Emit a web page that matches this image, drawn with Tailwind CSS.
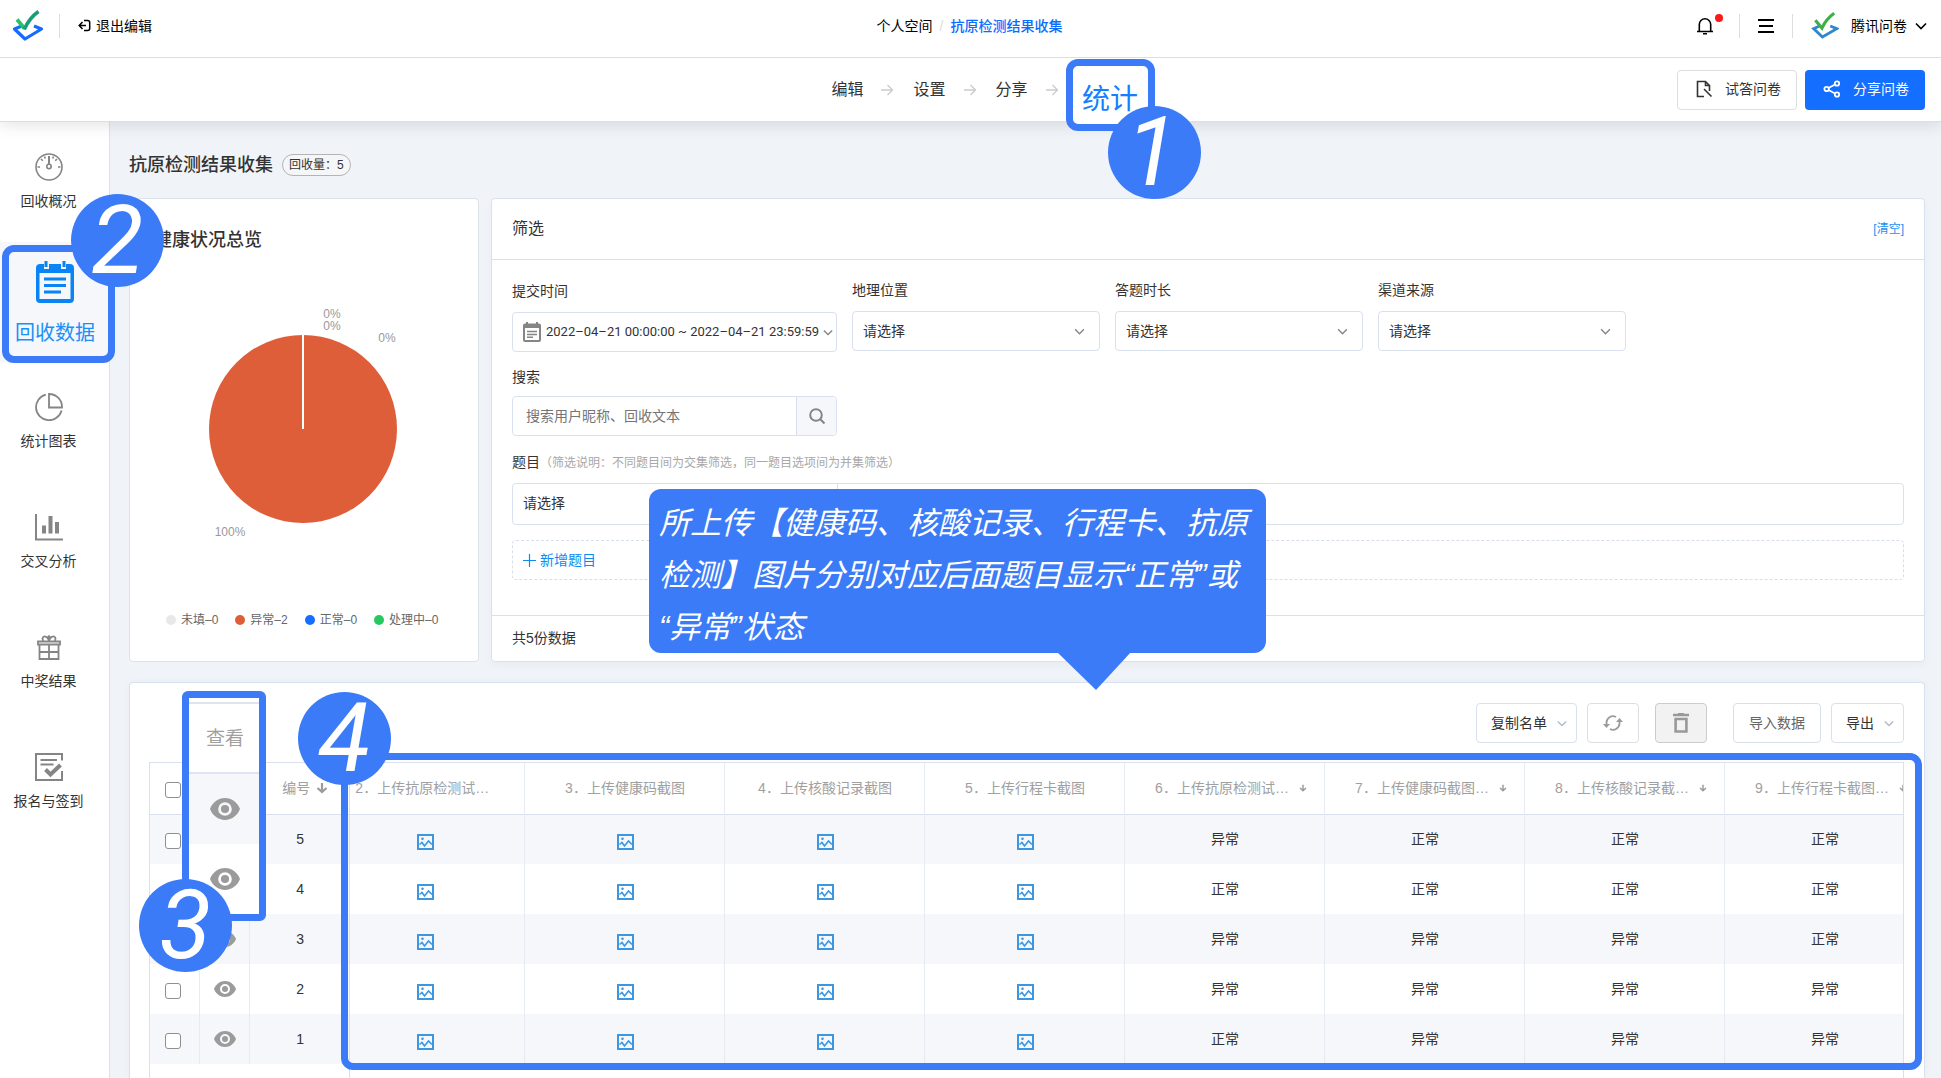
<!DOCTYPE html>
<html lang="zh-CN">
<head>
<meta charset="utf-8">
<meta name="viewport" content="width=device-width, initial-scale=1">
<title>抗原检测结果收集 - 腾讯问卷</title>
<script src="https://cdn.jsdelivr.net/npm/@tailwindcss/browser@4"></script>
</head>
<body class="flex min-h-screen flex-col overflow-x-hidden bg-[#f0f4f8] font-['Liberation_Sans','Noto_Sans_CJK_SC',sans-serif] text-sm leading-5 text-[#333]">

<svg class="hidden" aria-hidden="true">
  <symbol id="eye" viewBox="0 0 22 16"><path fill="#9b9b9b" fill-rule="evenodd" d="M11 0C6 0 1.800 3.300 0 8c1.800 4.700 6 8 11 8s9.200-3.300 11-8C20.200 3.300 16 0 11 0Zm0 13a5 5 0 1 1 0-10 5 5 0 0 1 0 10Zm0-2a3 3 0 1 0 0-6 3 3 0 0 0 0 6Z"/></symbol>
  <symbol id="image" viewBox="0 0 17 16"><path fill="none" stroke="#3d96e0" stroke-width="2" d="M1 1h15v14H1z"/><path fill="none" stroke="#3d96e0" stroke-width="1.600" d="m2.500 10.500 2.500-2L7.500 12l4-5L15 10.500"/><circle cx="5.500" cy="4.800" r="1.300" fill="#3d96e0"/></symbol>
  <symbol id="chev" viewBox="0 0 12 8"><path fill="none" stroke="currentColor" stroke-width="1.600" d="m1 1.500 5 5 5-5"/></symbol>
  <symbol id="down" viewBox="0 0 12 12"><path fill="none" stroke="#9b9b9b" stroke-width="2.200" d="M6 1v9M1.500 6 6 10l4.500-4"/></symbol>
  <symbol id="step" viewBox="0 0 12 12"><path fill="none" stroke="#ccc" stroke-width="1.400" d="M0 6h11M6.500 1l5 5-5 5"/></symbol>
</svg>

<div class="relative z-20 bg-white shadow-[0_4px_14px_rgba(0,0,0,0.1)]">
  <header class="grid h-[58px] grid-cols-[1fr_auto_1fr] items-center border-b border-[#dcdee0] pr-[14px] pb-[6px] pl-3 text-black">
    <div class="flex items-center">
      <svg class="h-8 w-8" viewBox="0 0 32 32" role="img" aria-label="腾讯问卷">
        <path fill="none" stroke="#146cff" stroke-width="3.200" stroke-linejoin="round" d="M11 15.500 2.500 19 13 29 29.500 19 22 16"/>
        <path fill="none" stroke="#25c46a" stroke-width="3.800" d="M5 9.500l7.500 9"/><path fill="none" stroke="#1a9c78" stroke-width="3.600" d="M12.200 19.500C16 11 20 6 26.500 1.500"/>
      </svg>
      <span class="ml-[15px] h-6 w-px bg-[#dcdee0]"></span>
      <a href="#" class="ml-[18px] flex items-center gap-[5px]">
        <svg class="h-[13px] w-[13px]" viewBox="0 0 13 13" fill="none" stroke="#000" stroke-width="1.500"><path d="M1.500 6.500H8M4.500 3l-3.300 3.500L4.500 10M6 1.500h3.500c1.500 0 2.200.7 2.200 2v6c0 1.300-.7 2-2.200 2H6"/></svg>
        退出编辑
      </a>
    </div>
    <nav class="flex items-center gap-[7px]">
      <a href="#">个人空间</a><span class="text-[#ddd]">/</span><a href="#" class="font-medium text-[#0a6cff]">抗原检测结果收集</a>
    </nav>
    <div class="flex items-center justify-end">
      <button class="relative mr-[26px]" aria-label="通知">
        <svg class="h-[18px] w-4" viewBox="0 0 16 18" fill="none" stroke="#000" stroke-width="1.600"><path d="M0 14.500h16M2.300 14.500V7.500a5.700 5.700 0 0 1 11.400 0v7M6 16.800h4"/></svg>
        <span class="absolute -top-[3px] left-[18px] h-2 w-2 rounded-full bg-[#fb1818]"></span>
      </button>
      <span class="h-6 w-px bg-[#dcdee0]"></span>
      <button class="mx-[18px]" aria-label="菜单"><svg class="h-4 w-4" viewBox="0 0 16 16" stroke="#000" stroke-width="1.800"><path d="M0 2h16M1 8h14M0 14h16"/></svg></button>
      <span class="mr-[18px] h-6 w-px bg-[#dcdee0]"></span>
      <button class="flex items-center">
        <svg class="mr-3 h-7 w-7" viewBox="0 0 32 32"><path fill="none" stroke="#3186cc" stroke-width="3.200" d="M11 15.500 3 19 13 28.500 29.500 19 22 16"/><path fill="none" stroke="#3eae48" stroke-width="3.600" d="M5 9.500l7.500 9C16 11 20 6 26.500 1.500"/></svg>
        腾讯问卷
        <svg class="ml-2 h-2 w-3" aria-hidden="true"><use href="#chev"/></svg>
      </button>
    </div>
  </header>

  <div class="grid h-16 grid-cols-[1fr_auto_1fr] items-center border-b border-[#dcdee0] px-4">
    <nav class="col-start-2 flex items-center text-base">
      <a href="#">编辑</a><svg class="mr-5 ml-[18px] h-3 w-3"><use href="#step"/></svg>
      <a href="#">设置</a><svg class="mr-5 ml-[18px] h-3 w-3"><use href="#step"/></svg>
      <a href="#">分享</a><svg class="mr-5 ml-[18px] h-3 w-3"><use href="#step"/></svg>
      <span class="relative h-5 w-8">
        <a href="#" class="absolute -top-[21px] -left-3 flex h-[72px] w-[89px] items-center justify-center rounded-xl border-[7px] border-[#3b7bf7] bg-white pt-[10px] text-[28px] leading-8 text-[#1480ff]">统计</a>
        <span class="absolute top-[26px] left-[30px] flex h-[93px] w-[93px] items-center justify-center rounded-full bg-[#3b7bf7] pr-1 font-['Roboto'] text-[96px] leading-[93px] text-white italic">1</span>
      </span>
    </nav>
    <div class="flex justify-end gap-2">
      <button class="flex h-10 w-[120px] items-center gap-3 rounded-sm border border-[#dcdee0] pl-[17px] pb-px">
        <svg class="h-[18px] w-[18px]" viewBox="0 0 18 18" fill="none" stroke="#333" stroke-width="1.600"><path d="M9 16.500H2.500v-15h8l4 4V11M10.500 1.500v4h4M9 9l7.500 7.500"/></svg>试答问卷
      </button>
      <button class="flex h-10 w-[120px] items-center gap-3 rounded-sm bg-[#146eff] pl-[18px] pb-px text-white">
        <svg class="h-[18px] w-[18px]" viewBox="0 0 18 18" fill="none" stroke="#fff" stroke-width="1.800"><circle cx="3.600" cy="9" r="2.200"/><circle cx="14" cy="3.500" r="2.200"/><circle cx="14" cy="14.500" r="2.200"/><path d="M5.500 8 12 4.500M5.500 10l6.500 3.500"/></svg>分享问卷
      </button>
    </div>
  </div>
</div>

<div class="flex flex-1">
  <aside class="relative z-10 w-[110px] shrink-0 border-r border-[#dbe2ee] bg-white pr-3">
    <nav>
      <a href="#" class="flex h-[120px] flex-col items-center gap-[10px] pt-[31px]">
        <svg class="h-7 w-7" viewBox="0 0 28 28" fill="none" stroke="#858585" stroke-width="1.600"><circle cx="14" cy="14" r="13"/><circle cx="14" cy="13.500" r="2.200"/><path stroke-width="2" d="M14 3v8"/><path d="M2.500 14h2.500M23 14h2.500M6 6l1.800 1.800M22 6l-1.800 1.800M9.500 3.500l.8 2M18.500 3.500l-.8 2"/></svg>回收概况
      </a>
      <a href="#" class="relative -mr-3 block h-[120px] bg-[#f5f7fa]">
        <span class="absolute top-[3px] left-[2px] flex h-[118px] w-[113px] flex-col items-center rounded-xl border-[7px] border-[#3b7bf7] bg-[#f5f7fa] pt-[9px] pr-[7px] text-xl leading-6 text-[#1a90f8]">
          <svg class="h-[42px] w-[38px]" viewBox="0 0 38 42"><path fill="#0a84f5" d="M4 3h4v5h5V3h12v5h5V3h4c2.500 0 4 1.500 4 4v31c0 2.500-1.500 4-4 4H4c-2.500 0-4-1.500-4-4V7c0-2.500 1.500-4 4-4Z"/><path fill="#f5f7fa" d="M3.500 12h31v26h-31z"/><path stroke="#0a84f5" stroke-width="3" d="M8 18h22M8 24.500h22M8 31h17"/><path stroke="#0a84f5" stroke-width="3" d="M10 0v6M28 0v6"/></svg>
          <span class="mt-[18px]">回收数据</span>
        </span>
        <span class="absolute -top-12 left-[71px] flex h-[93px] w-[93px] items-center justify-center rounded-full bg-[#3b7bf7] font-['Roboto'] text-[96px] leading-[93px] text-white italic">2</span>
      </a>
      <a href="#" class="flex h-[120px] flex-col items-center gap-[10px] pt-[31px]">
        <svg class="h-7 w-7" viewBox="0 0 28 28" fill="none" stroke="#858585" stroke-width="1.800"><path d="M14 1v13.500h13A13 13 0 0 0 14 1ZM10.800 1.600A13 13 0 1 0 26.600 17.500"/></svg>统计图表
      </a>
      <a href="#" class="flex h-[120px] flex-col items-center gap-[10px] pt-[31px]">
        <svg class="h-7 w-7" viewBox="0 0 28 28" fill="none" stroke="#858585"><path stroke-width="2" d="M1 1v25.500h27"/><path stroke-width="4" d="M9 20.500v-8M15.500 20.500V3M22 20.500V9"/></svg>交叉分析
      </a>
      <a href="#" class="flex h-[120px] flex-col items-center gap-[10px] pt-[31px]">
        <svg class="h-7 w-7" viewBox="0 0 28 28" fill="none" stroke="#858585" stroke-width="1.800"><path d="M3 8.500h22v3H3zM4.500 12v14h19V12M4.500 19h19M14 12v14"/><path d="M14 8c-1-5-6-6-6.500-2.500L8 8M14 8c1-5 6-6 6.500-2.500L20 8M14 8c-2-4 0-5 0-5s2 1 0 5"/></svg>中奖结果
      </a>
      <a href="#" class="flex h-[120px] flex-col items-center gap-[10px] pt-[31px]">
        <svg class="h-7 w-7" viewBox="0 0 28 28" fill="none" stroke="#858585" stroke-width="2"><path d="M27 7.500V1H1v26h26v-9M5.500 7H22M5.500 11.500h13"/><path stroke-width="4" d="m10.500 16.500 5 5L25.500 12"/></svg>报名与签到
      </a>
    </nav>
  </aside>

  <main class="flex min-w-0 flex-1 flex-col pr-4 pl-[19px]">
    <div class="flex h-[76px] items-center gap-[9px] pt-[10px]">
      <h1 class="text-lg leading-6 font-medium">抗原检测结果收集</h1>
      <span class="flex h-[22px] items-center rounded-full border border-[#b4b4b4] bg-[#f5f6f7] px-[6px] text-xs">回收量：5</span>
    </div>

    <div class="flex gap-3">
      <section class="h-[464px] w-[350px] shrink-0 rounded border border-[#dbe2ea] bg-white px-6 pt-[29px]">
        <h2 class="text-lg leading-6 font-medium">健康状况总览</h2>
        <svg class="mt-[42px] ml-[19px] h-[300px] w-[260px] font-['Liberation_Sans'] text-xs" viewBox="0 0 260 300" fill="#999" text-anchor="middle">
          <circle cx="130" cy="135" r="94" fill="#df5e3a"/>
          <path stroke="#fff" stroke-width="2" d="M130 40v95"/>
          <text x="159" y="24">0%</text><text x="159" y="36">0%</text><text x="214" y="48">0%</text><text x="57" y="242">100%</text>
        </svg>
        <ul class="mt-[18px] ml-3 flex gap-[17px] text-xs leading-4 whitespace-nowrap text-[#666]">
          <li class="flex items-center gap-[5px]"><span class="h-[10px] w-[10px] rounded-full bg-[#e8e8e8]"></span>未填–0</li>
          <li class="flex items-center gap-[5px]"><span class="h-[10px] w-[10px] rounded-full bg-[#df5e3a]"></span>异常–2</li>
          <li class="flex items-center gap-[5px]"><span class="h-[10px] w-[10px] rounded-full bg-[#146eff]"></span>正常–0</li>
          <li class="flex items-center gap-[5px]"><span class="h-[10px] w-[10px] rounded-full bg-[#26c95f]"></span>处理中–0</li>
        </ul>
      </section>

      <section class="relative min-w-0 flex-1 rounded border border-[#d9e1ee] bg-white shadow-[0_4px_10px_rgba(0,0,0,0.03)]">
        <div class="flex h-[61px] items-center justify-between border-b border-[#d9e1ee] px-5">
          <h2 class="text-base">筛选</h2>
          <button class="text-xs text-[#1a90f0]">[清空]</button>
        </div>
        <form class="px-5 pt-5">
          <div class="flex items-start gap-[15px]">
            <div class="flex w-[325px] flex-col gap-[10px]">
              <span id="time-label" class="leading-[22px]">提交时间</span>
              <button type="button" aria-labelledby="time-label" class="flex h-10 items-center rounded-sm border border-[#d9e1ee] pl-[10px] whitespace-nowrap">
                <svg class="mr-[5px] h-5 w-[18px] shrink-0" viewBox="0 0 18 20"><path fill="#858585" fill-rule="evenodd" d="M2 1.500h1V0h2v1.500h8V0h2v1.500h1a2 2 0 0 1 2 2V18a2 2 0 0 1-2 2H2a2 2 0 0 1-2-2V3.500a2 2 0 0 1 2-2ZM2 6v12h14V6Z"/><path stroke="#858585" stroke-width="1.600" d="M4 9.500h10M4 12.500h10M4 15.200h6"/></svg>
                <span class="font-['Roboto'] text-[13px]">2022–04–21 00:00:00 ~ 2022–04–21 23:59:59</span>
                <svg class="ml-1 h-[7px] w-[10px] shrink-0 text-[#858585]"><use href="#chev"/></svg>
              </button>
            </div>
            <div class="flex w-[248px] flex-col gap-[11px]">
              <label for="loc">地理位置</label>
              <div class="relative text-[#858585]"><select id="loc" class="h-10 w-full appearance-none rounded-sm border border-[#d9e1ee] px-[10px] text-[#333]"><option>请选择</option></select><svg class="pointer-events-none absolute top-[17px] right-[15px] h-[7px] w-[11px]"><use href="#chev"/></svg></div>
            </div>
            <div class="flex w-[248px] flex-col gap-[11px]">
              <label for="dur">答题时长</label>
              <div class="relative text-[#858585]"><select id="dur" class="h-10 w-full appearance-none rounded-sm border border-[#d9e1ee] px-[10px] text-[#333]"><option>请选择</option></select><svg class="pointer-events-none absolute top-[17px] right-[15px] h-[7px] w-[11px]"><use href="#chev"/></svg></div>
            </div>
            <div class="flex w-[248px] flex-col gap-[11px]">
              <label for="src">渠道来源</label>
              <div class="relative text-[#858585]"><select id="src" class="h-10 w-full appearance-none rounded-sm border border-[#d9e1ee] px-[10px] text-[#333]"><option>请选择</option></select><svg class="pointer-events-none absolute top-[17px] right-[15px] h-[7px] w-[11px]"><use href="#chev"/></svg></div>
            </div>
          </div>
          <div class="mt-[15px] flex w-[325px] flex-col gap-[9px]">
            <label for="q">搜索</label>
            <div class="flex h-10 overflow-hidden rounded-sm border border-[#d9e1ee]">
              <input id="q" type="text" placeholder="搜索用户昵称、回收文本" class="min-w-0 flex-1 px-[13px] placeholder:text-[#757575]">
              <button type="button" aria-label="搜索" class="flex w-10 items-center justify-center border-l border-[#d9e1ee] bg-[#f5f7fa]"><svg class="h-4 w-4" viewBox="0 0 16 16" fill="none" stroke="#858585" stroke-width="2"><circle cx="7" cy="7" r="5.800"/><path d="m11 11 4.500 4.500"/></svg></button>
            </div>
          </div>
          <div class="mt-4">
            <label for="topic">题目<span class="text-xs text-[#a8a8a8]">（筛选说明：不同题目间为交集筛选，同一题目选项间为并集筛选）</span></label>
            <div class="mt-[11px] flex h-[42px] rounded-sm border border-[#d9e1ee]">
              <select id="topic" class="w-[325px] appearance-none border-r border-[#d9e1ee] px-[10px] pb-[2px]"><option>请选择</option></select>
            </div>
            <button type="button" class="mt-[15px] flex h-10 w-full items-center gap-1 rounded-sm border border-dashed border-[#d9dfe8] pl-[10px] text-[#0a8cf0]">
              <svg class="h-[13px] w-[13px]" viewBox="0 0 13 13" stroke="#0a8cf0" stroke-width="1.200"><path d="M6.500 0v13M0 6.500h13"/></svg>新增题目
            </button>
          </div>
        </form>
        <p class="mt-[35px] border-t border-[#d9e1ee] px-5 pt-3">共5份数据</p>

        <div class="absolute top-[290px] left-[157px] z-10 h-[164px] w-[617px] rounded-xl bg-[#3b7bf7] pt-[9px] pl-[10px] text-[31px] leading-[52px] whitespace-nowrap text-white italic">
          <p>所上传【健康码、核酸记录、行程卡、抗原</p><p>检测】图片分别对应后面题目显示“正常”或</p><p>“异常”状态</p>
          <svg class="absolute top-[163px] left-[408px] h-[38px] w-[74px]" viewBox="0 0 74 38"><path fill="#3b7bf7" d="M0 0h74L39 38Z"/></svg>
        </div>
      </section>
    </div>

    <section class="relative mt-5 flex flex-1 flex-col rounded-t border border-b-0 border-[#d9e1ee] bg-white pt-5 pr-5 pl-[19px] shadow-[0_0_10px_rgba(0,0,0,0.03)]">
      <div class="mb-[19px] flex justify-end text-sm">
        <button class="mr-[10px] flex h-10 w-[101px] items-center gap-[10px] rounded-sm border border-[#d9e1ee] pl-[14px] whitespace-nowrap">复制名单<svg class="h-[7px] w-[10px] text-[#b0bac8]"><use href="#chev"/></svg></button>
        <button class="mr-4 flex h-10 w-[52px] items-center justify-center rounded-sm border border-[#dcdee4]" aria-label="刷新"><svg class="h-4 w-5" viewBox="0 0 20 16" fill="none" stroke="#9b9b9b" stroke-width="1.800"><path d="M3.500 10V8A6.500 6.500 0 0 1 13 2M16.500 6v2A6.500 6.500 0 0 1 7 14"/><path fill="#9b9b9b" stroke="none" d="M0 9h7l-3.500 4ZM20 7h-7l3.500-4Z"/></svg></button>
        <button class="mr-[26px] flex h-10 w-[52px] items-center justify-center rounded-sm border border-[#ccc] bg-[#f2f2f2]" aria-label="删除"><svg class="h-5 w-4" viewBox="0 0 16 20" fill="none" stroke="#999"><path stroke-width="2.400" d="M0 2h16M5 .8h6"/><path stroke-width="2.600" d="M2.600 6h10.800v12.500H2.600z"/></svg></button>
        <button class="mr-[10px] h-10 w-[88px] rounded-sm border border-[#d9dfe8] text-[#666]">导入数据</button>
        <button class="flex h-10 w-[73px] items-center gap-[10px] rounded-sm border border-[#d9e1ee] pl-[14px]">导出<svg class="h-[7px] w-[10px] text-[#b0bac8]"><use href="#chev"/></svg></button>
      </div>

      <div class="relative flex-1">
        <div class="h-full overflow-hidden border border-b-0 border-[#d9e1ee]">
          <div class="relative h-full w-[1774px]">
            <table class="w-full table-fixed border-collapse text-center">
              <colgroup><col class="w-[49px]"><col class="w-[50px]"><col class="w-[100px]"><col class="w-[175px]"><col class="w-[200px]"><col class="w-[200px]"><col class="w-[200px]"><col class="w-[200px]"><col class="w-[200px]"><col class="w-[200px]"><col class="w-[200px]"></colgroup>
              <thead><tr id="head" class="h-[51px] border-b border-[#d9e1ee] text-[#a0a0a0]"></tr></thead>
              <tbody id="rows"></tbody>
            </table>
            <span class="absolute inset-y-0 left-[199px] w-px bg-[#d9e1ee]"></span>
          </div>
        </div>

        <div class="absolute -top-[9px] -right-[18px] left-[192px] h-[317px] rounded-xl border-[7px] border-[#3b7bf7]"></div>
        <div class="absolute -top-[71px] left-[33px] h-[230px] w-[84px] rounded-md border-[7px] border-[#3b7bf7] bg-white pt-1">
          <p class="flex h-[72px] items-center justify-center border-y-2 border-[#dfe5f0] pt-[2px] pl-[2px] text-[19px] text-[#a0a0a0]">查看</p>
          <p class="flex h-[70px] items-center justify-center bg-[#f5f7fa] pl-[2px]"><svg class="h-[22px] w-[30px]"><use href="#eye"/></svg></p>
          <p class="flex h-[70px] items-center justify-center pl-[2px]"><svg class="h-[22px] w-[30px]"><use href="#eye"/></svg></p>
        </div>
        <span class="absolute top-[117px] -left-[10px] flex h-[93px] w-[93px] items-center justify-center rounded-full bg-[#3b7bf7] font-['Roboto'] text-[96px] leading-[93px] text-white italic">3</span>
        <span class="absolute -top-[70px] left-[149px] flex h-[93px] w-[93px] items-center justify-center rounded-full bg-[#3b7bf7] font-['Roboto'] text-[96px] leading-[93px] text-white italic">4</span>
      </div>
    </section>
  </main>
</div>

<script>
  const box = '<input type="checkbox" aria-label="选择" class="mx-auto mt-1 block h-4 w-4 appearance-none rounded-[3px] border border-[#8f8f8f] bg-white">';
  const line = 'border-r border-[#e6ebf3]';
  const titles = ['2．上传抗原检测试…', '3．上传健康码截图', '4．上传核酸记录截图', '5．上传行程卡截图', '6．上传抗原检测试…', '7．上传健康码截图…', '8．上传核酸记录截…', '9．上传行程卡截图…'];
  document.getElementById('head').innerHTML =
    `<th class="pr-[2px] font-normal ${line}">${box}</th><th class="font-normal ${line}">查看</th>` +
    '<th class="font-normal"><span class="flex items-center justify-center gap-[6px] pl-3">编号<svg class="h-3 w-3"><use href="#down"/></svg></span></th>' +
    titles.map((t, i) => i < 4
      ? `<th class="font-normal whitespace-nowrap ${line} ${i === 0 ? 'pr-7' : 'pl-[2px]'}">${t}</th>`
      : `<th class="font-normal whitespace-nowrap ${line}"><span class="flex items-center justify-center gap-[10px] pl-[14px]">${t}<svg class="h-2 w-2"><use href="#down"/></svg></span></th>`).join('');
  const data = [[5, '异常', '正常', '正常', '正常'], [4, '正常', '正常', '正常', '正常'], [3, '异常', '异常', '异常', '正常'], [2, '异常', '异常', '异常', '异常'], [1, '正常', '异常', '异常', '异常']];
  document.getElementById('rows').innerHTML = data.map(([n, ...s]) =>
    `<tr class="h-[50px] odd:bg-[#f5f7fa]"><td class="pr-[2px] ${line}">${box}</td>` +
    `<td class="pl-[2px] ${line}"><svg class="mx-auto h-4 w-[22px]"><use href="#eye"/></svg></td><td class="pl-[2px]">${n}</td>` +
    [0, 1, 2, 3].map(i => `<td class="${line} ${i === 0 ? 'pr-[22px]' : 'pl-[2px]'}"><svg class="mx-auto mt-[6px] h-4 w-[17px]"><use href="#image"/></svg></td>`).join('') +
    s.map(v => `<td class="pl-[2px] ${line}">${v}</td>`).join('') + '</tr>').join('');
</script>
</body>
</html>
